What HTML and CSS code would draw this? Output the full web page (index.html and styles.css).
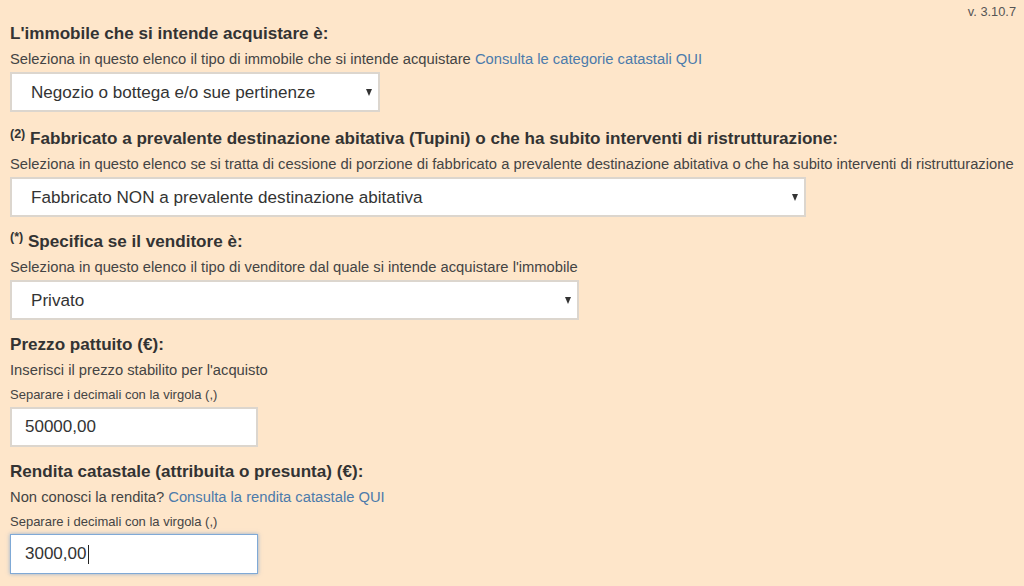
FILE: index.html
```html
<!DOCTYPE html>
<html lang="it">
<head>
<meta charset="utf-8">
<title>Calcolo imposte acquisto immobile</title>
<link rel="stylesheet" href="styles.css">
</head>
<body>
<div class="version">v. 3.10.7</div>
<form class="form">
  <div class="group first">
    <h3 class="label">L'immobile che si intende acquistare è:</h3>
    <p class="help">Seleziona in questo elenco il tipo di immobile che si intende acquistare <a href="#">Consulta le categorie catastali QUI</a></p>
    <div class="select-wrap w1">
      <select class="select"><option>Negozio o bottega e/o sue pertinenze</option></select>
      <span class="arrow"></span>
    </div>
  </div>
  <div class="group">
    <h3 class="label"><sup class="note">(2)</sup> Fabbricato a prevalente destinazione abitativa (Tupini) o che ha subito interventi di ristrutturazione:</h3>
    <p class="help">Seleziona in questo elenco se si tratta di cessione di porzione di fabbricato a prevalente destinazione abitativa o che ha subito interventi di ristrutturazione</p>
    <div class="select-wrap w2">
      <select class="select"><option>Fabbricato NON a prevalente destinazione abitativa</option></select>
      <span class="arrow"></span>
    </div>
  </div>
  <div class="group">
    <h3 class="label"><sup class="note">(*)</sup> Specifica se il venditore è:</h3>
    <p class="help">Seleziona in questo elenco il tipo di venditore dal quale si intende acquistare l'immobile</p>
    <div class="select-wrap w3">
      <select class="select"><option>Privato</option></select>
      <span class="arrow"></span>
    </div>
  </div>
  <div class="group">
    <h3 class="label">Prezzo pattuito (€):</h3>
    <p class="help">Inserisci il prezzo stabilito per l'acquisto</p>
    <p class="small">Separare i decimali con la virgola (,)</p>
    <input class="input" type="text" value="50000,00">
  </div>
  <div class="group">
    <h3 class="label">Rendita catastale (attribuita o presunta) (€):</h3>
    <p class="help">Non conosci la rendita? <a href="#">Consulta la rendita catastale QUI</a></p>
    <p class="small">Separare i decimali con la virgola (,)</p>
    <div class="input-wrap">
      <input class="input focused" type="text" value="3000,00">
      <span class="caret"></span>
    </div>
  </div>
</form>
</body>
</html>
```
FILE: styles.css
```css
html, body {
  margin: 0;
  padding: 0;
  background: #fee6ca;
}
body {
  font-family: "Liberation Sans", Arial, sans-serif;
  color: #333;
  padding: 0 8px 0 10px;
  overflow: hidden;
}
.version {
  text-align: right;
  font-size: 12.8px;
  line-height: 16px;
  color: #555;
  padding: 4px 0 0 0;
}
.form {
  margin-top: 4px;
}
.group {
  margin-bottom: 15px;
}
.group.first {
  margin-bottom: 17px;
}
.label {
  margin: 0 0 5px;
  font-size: 17.1px;
  line-height: 20px;
  font-weight: bold;
  color: #333;
  white-space: nowrap;
}
.note {
  font-size: 12.5px;
  line-height: 0;
  vertical-align: 6px;
}
.help {
  margin: 0 0 3px;
  font-size: 14.75px;
  line-height: 20px;
  color: #444;
  white-space: nowrap;
}
.help a {
  color: #4c7bab;
  text-decoration: none;
}
.small {
  margin: 6px 0 3px;
  font-size: 13px;
  line-height: 18px;
  color: #444;
}
.select-wrap {
  position: relative;
  height: 40px;
}
.w1 { width: 370px; }
.w2 { width: 796px; }
.w3 { width: 569px; }
.select {
  appearance: none;
  -webkit-appearance: none;
  width: 100%;
  height: 40px;
  box-sizing: border-box;
  border: 2px solid #dcd6ce;
  border-radius: 0;
  background: #fff;
  padding: 0 30px 0 19px;
  font-family: "Liberation Sans", Arial, sans-serif;
  font-size: 17.1px;
  color: #333;
  outline: none;
}
.arrow {
  position: absolute;
  right: 8px;
  top: 17px;
  width: 0;
  height: 0;
  border-left: 3.5px solid transparent;
  border-right: 3.5px solid transparent;
  border-top: 7px solid #333;
  pointer-events: none;
}
.input-wrap {
  position: relative;
  width: 248px;
}
.input {
  display: block;
  width: 248px;
  height: 40px;
  box-sizing: border-box;
  border: 2px solid #dcd6ce;
  border-radius: 0;
  background: #fff;
  padding: 0 13px;
  font-family: "Liberation Sans", Arial, sans-serif;
  font-size: 17px;
  color: #333;
  outline: none;
}
.input.focused {
  border: 1px solid #7fa9d6;
  padding: 0 14px;
  box-shadow: 0 0 4px rgba(102, 153, 210, 0.7);
}
.caret {
  position: absolute;
  left: 78px;
  top: 11px;
  width: 1px;
  height: 19px;
  background: #222;
}
```
